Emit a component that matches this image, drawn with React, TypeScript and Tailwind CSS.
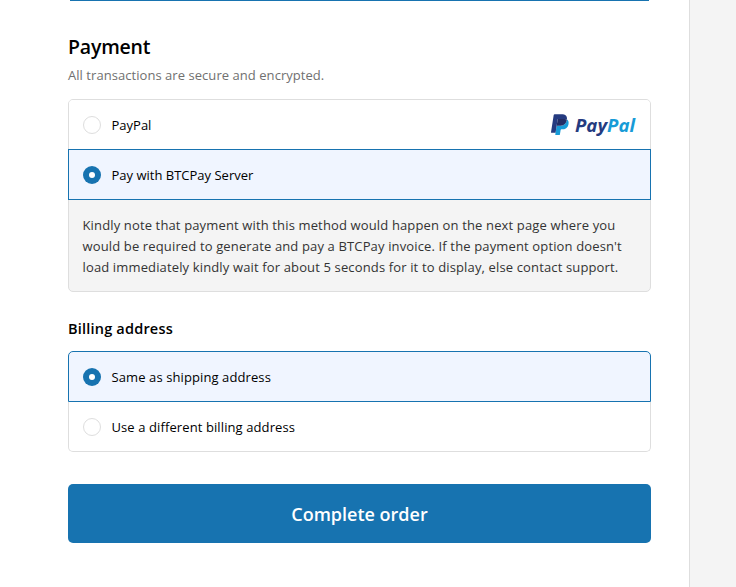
import React from "react";

function Radio({ checked = false }: { checked?: boolean }) {
  return checked ? (
    <span className="flex size-[18px] shrink-0 items-center justify-center rounded-full bg-[#1773b0]">
      <span className="size-1.5 rounded-full bg-white" />
    </span>
  ) : (
    <span className="size-[18px] shrink-0 rounded-full border border-[#dedede] bg-white" />
  );
}

function PayPalLogo() {
  return (
    <svg width="87" height="24" viewBox="0 0 87 24" className="shrink-0 overflow-visible" role="img" aria-label="PayPal">
      <g transform="translate(2 1.3) scale(0.69)">
        <path fill="#179bd7" d="M23.048 7.667c-.028.179-.06.362-.096.55-1.237 6.351-5.469 8.545-10.874 8.545H9.326c-.661 0-1.218.48-1.321 1.132L6.596 26.83l-.399 2.533c-.067.428.263.814.695.814h4.881c.578 0 1.069-.42 1.16-.99l.048-.248.919-5.832.059-.32c.09-.572.582-.992 1.16-.992h.73c4.729 0 8.431-1.92 9.513-7.476.452-2.321.218-4.259-.978-5.622-.362-.411-.811-.752-1.336-1.03z" />
        <path fill="#222d65" d="M21.754 7.151c-.189-.055-.384-.105-.584-.15-.201-.044-.407-.083-.619-.117-.742-.12-1.555-.177-2.426-.177h-7.352c-.181 0-.353.041-.507.115-.339.163-.591.484-.652.877L8.05 17.605l-.045.289c.103-.652.66-1.132 1.321-1.132h2.752c5.405 0 9.637-2.195 10.874-8.545.037-.188.068-.371.096-.55-.313-.166-.652-.308-1.017-.429-.09-.03-.183-.059-.277-.087z" />
        <path fill="#253b80" d="M9.614 7.699c.061-.393.313-.714.652-.876.155-.074.326-.115.507-.115h7.352c.871 0 1.684.057 2.426.177.212.034.418.073.619.117.2.045.395.095.584.15.094.028.187.057.278.086.365.121.704.264 1.017.429.368-2.347-.003-3.945-1.272-5.392C20.378.682 17.853 0 14.622 0h-9.38c-.66 0-1.223.48-1.325 1.133L.01 25.898c-.077.49.301.932.795.932h5.791l1.454-9.225z" />
      </g>
      <text x="26" y="19" fontSize="17" fontWeight="750" fontStyle="italic" textLength="60" lengthAdjust="spacingAndGlyphs">
        <tspan fill="#253b80">Pay</tspan>
        <tspan fill="#179bd7">Pal</tspan>
      </text>
    </svg>
  );
}

export default function App() {
  return (
    <div className="flex h-[587px] w-full overflow-hidden bg-white font-['Open_Sans',sans-serif] text-[13px] text-black">
      <main className="w-[689px] shrink-0 pl-[68px]">
        <div className="flex w-[583px] flex-col">
          <div className="mx-0.5 h-px bg-[#1773b0]" />
          <h2 className="mt-8 text-[19.5px] leading-7 font-semibold tracking-[-0.2px]">Payment</h2>
          <p className="mt-1 leading-5 tracking-[0.05px] text-[#707070]">All transactions are secure and encrypted.</p>

          <section className="mt-3.5 h-[193px] rounded-[5px] border border-[#dedede] bg-[#f4f4f4]">
            <label className="flex h-[50px] items-center rounded-t-[4px] bg-white pr-3.5 pl-3.5">
              <Radio />
              <span className="ml-[10.5px] flex-1 pt-0.5">PayPal</span>
              <PayPalLogo />
            </label>
            <label className="-mx-px -mt-px flex h-[51px] items-center border border-[#1773b0] bg-[#f0f5ff] px-3.5">
              <Radio checked />
              <span className="ml-[10.5px] pt-0.5">Pay with BTCPay Server</span>
            </label>
            <p className="pt-[15px] pl-[13.5px] leading-[21px] tracking-[0.14px] whitespace-nowrap text-[#333]">
              <span className="block">Kindly note that payment with this method would happen on the next page where you</span>
              <span className="block">would be required to generate and pay a BTCPay invoice. If the payment option doesn't</span>
              <span className="block">load immediately kindly wait for about 5 seconds for it to display, else contact support.</span>
            </p>
          </section>

          <h3 className="mt-[26px] text-[14.5px] leading-[21px] font-semibold tracking-[0.2px]">Billing address</h3>

          <section className="mt-3 h-[101px]">
            <label className="flex h-[51px] items-center rounded-t-[5px] border border-[#1773b0] bg-[#f0f5ff] px-3.5">
              <Radio checked />
              <span className="ml-[10.5px] pt-0.5 tracking-[0.1px]">Same as shipping address</span>
            </label>
            <label className="flex h-[50px] items-center rounded-b-[5px] border border-t-0 border-[#dedede] bg-white px-3.5">
              <Radio />
              <span className="ml-[10.5px] pt-0.5 tracking-[0.1px]">Use a different billing address</span>
            </label>
          </section>

          <button className="mt-8 h-[59px] rounded-[5px] bg-[#1773b0] text-lg font-semibold text-white">Complete order</button>
        </div>
      </main>
      <aside className="flex-1 border-l border-[#dedede] bg-[#f4f4f4]" />
    </div>
  );
}
